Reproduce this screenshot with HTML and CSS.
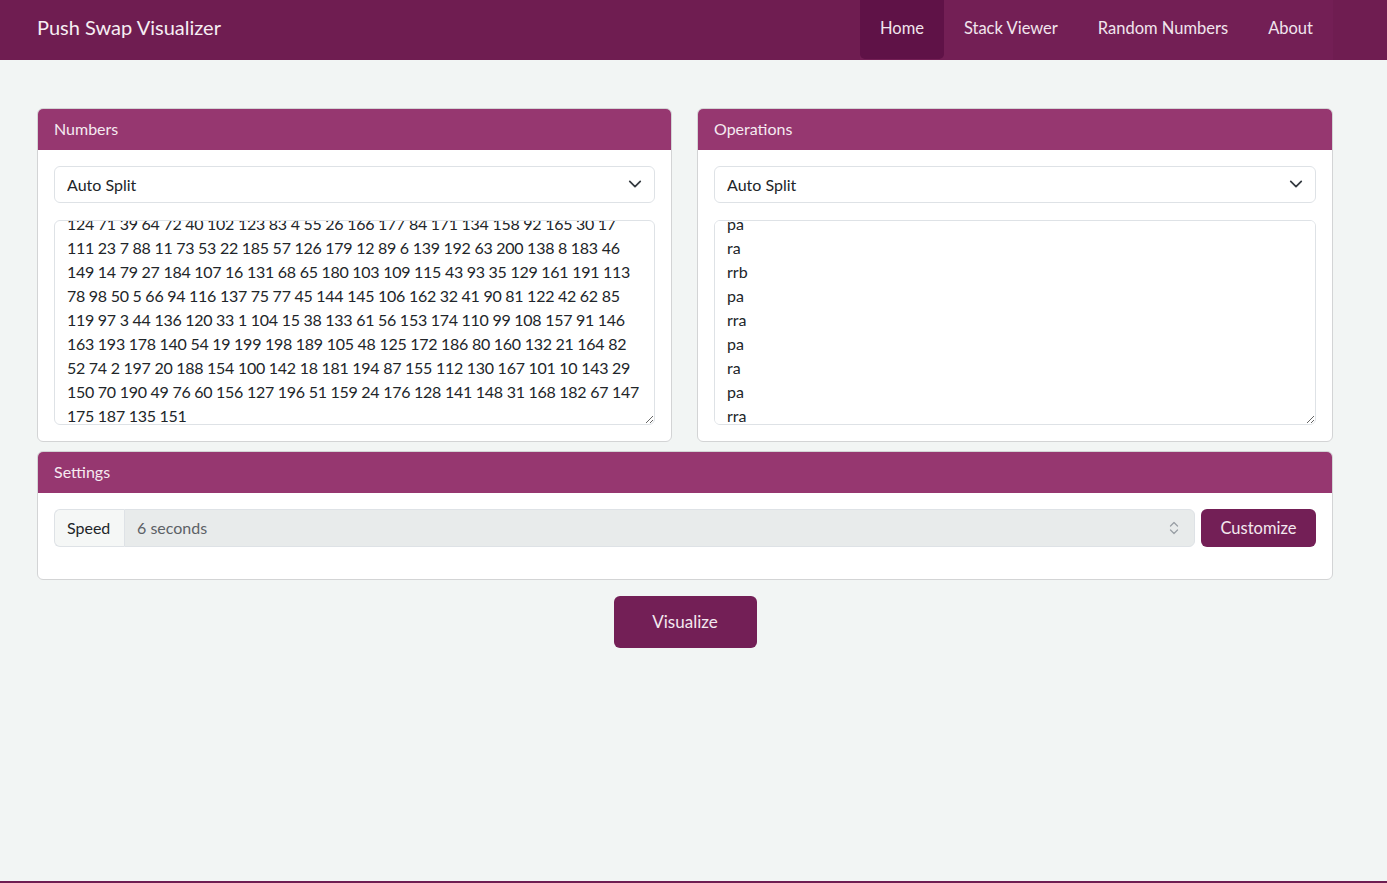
FILE: index.html
```html
<!DOCTYPE html>
<html lang="en">
<head>
<meta charset="utf-8">
<title>Push Swap Visualizer</title>
<link rel="stylesheet" href="styles.css">
</head>
<body>
<header class="navbar">
  <div class="nav-inner">
    <a class="brand" href="#">Push Swap Visualizer</a>
    <nav class="nav-links">
      <a class="nav-item active" href="#">Home</a>
      <a class="nav-item" href="#">Stack Viewer</a>
      <a class="nav-item" href="#">Random Numbers</a>
      <a class="nav-item" href="#">About</a>
    </nav>
  </div>
</header>

<main class="container">
  <div class="row">
    <section class="card">
      <div class="card-header">Numbers</div>
      <div class="card-body">
        <div class="select-wrap">
          <select class="form-select"><option>Auto Split</option></select>
          <svg class="chev" width="16" height="16" viewBox="0 0 16 16"><path d="M2 5l6 6 6-6" fill="none" stroke="#343a40" stroke-width="2" stroke-linecap="round" stroke-linejoin="round"/></svg>
        </div>
        <textarea class="form-text numbers scroll-end" spellcheck="false" wrap="off">33 86 117 36 152 59 118 170 114 185 69 96 47 121 195 13 37 9 169 180 173 28 58
124 71 39 64 72 40 102 123 83 4 55 26 166 177 84 171 134 158 92 165 30 17
111 23 7 88 11 73 53 22 185 57 126 179 12 89 6 139 192 63 200 138 8 183 46
149 14 79 27 184 107 16 131 68 65 180 103 109 115 43 93 35 129 161 191 113
78 98 50 5 66 94 116 137 75 77 45 144 145 106 162 32 41 90 81 122 42 62 85
119 97 3 44 136 120 33 1 104 15 38 133 61 56 153 174 110 99 108 157 91 146
163 193 178 140 54 19 199 198 189 105 48 125 172 186 80 160 132 21 164 82
52 74 2 197 20 188 154 100 142 18 181 194 87 155 112 130 167 101 10 143 29
150 70 190 49 76 60 156 127 196 51 159 24 176 128 141 148 31 168 182 67 147
175 187 135 151</textarea>
      </div>
    </section>
    <section class="card">
      <div class="card-header">Operations</div>
      <div class="card-body">
        <div class="select-wrap">
          <select class="form-select"><option>Auto Split</option></select>
          <svg class="chev" width="16" height="16" viewBox="0 0 16 16"><path d="M2 5l6 6 6-6" fill="none" stroke="#343a40" stroke-width="2" stroke-linecap="round" stroke-linejoin="round"/></svg>
        </div>
        <textarea class="form-text scroll-end" spellcheck="false">pb
pb
ra
pb
rb
pa
ra
pa
rra
pa
ra
pa
ra
rrb
pa
rra
pa
ra
pa
rra</textarea>
      </div>
    </section>
  </div>

  <section class="card settings">
    <div class="card-header">Settings</div>
    <div class="card-body">
      <div class="input-group">
        <span class="ig-label">Speed</span>
        <div class="ig-select">
          <select class="speed-select" disabled><option>6 seconds</option></select>
          <svg class="updown" width="10" height="16" viewBox="0 0 10 16"><path d="M1.5 6L5 2.5 8.5 6M1.5 10L5 13.5 8.5 10" fill="none" stroke="#9aa0a6" stroke-width="1.3" stroke-linecap="round" stroke-linejoin="round"/></svg>
        </div>
        <button class="btn btn-custom" type="button">Customize</button>
      </div>
    </div>
  </section>

  <div class="actions">
    <button class="btn btn-visualize" type="button">Visualize</button>
  </div>
</main>
<div class="bottom-line"></div>
<script src="script.js"></script>
</body>
</html>
```

FILE: styles.css
```css
* { box-sizing: border-box; }

html, body {
  margin: 0;
  padding: 0;
  height: 100%;
}

body {
  background: #f2f5f4;
  font-family: "Lato", "Liberation Sans", sans-serif;
  font-size: 16px;
  color: #212529;
  display: flex;
  flex-direction: column;
  min-height: 883px;
}

.navbar {
  background: #6f1d51;
  height: 60px;
}

.nav-inner {
  width: 1296px;
  margin-left: 37px;
  height: 60px;
  display: flex;
  align-items: center;
  justify-content: space-between;
}

.brand {
  color: #f6eef3;
  text-decoration: none;
  font-size: 20px;
  padding-bottom: 6px;
}

.nav-links {
  display: flex;
  height: 60px;
  background: #731f55;
}

.nav-item {
  display: flex;
  align-items: center;
  padding: 0 20px 3px;
  height: 59px;
  color: #f1e5ed;
  text-decoration: none;
  font-size: 16.5px;
}

.nav-item.active {
  background: #5f1247;
  border-radius: 0 0 5px 5px;
}

.container {
  width: 1296px;
  margin-left: 37px;
  padding-top: 48px;
  flex: 1;
}

.row {
  display: grid;
  grid-template-columns: 635px 636px;
  column-gap: 25px;
  margin-bottom: 9px;
}

.card {
  background: #fff;
  border: 1px solid #d3d4d5;
  border-radius: 6px;
  overflow: hidden;
}

.card-header {
  background: #963770;
  color: #f5eaf1;
  height: 41px;
  padding: 0 16px 2px;
  display: flex;
  align-items: center;
  font-size: 16px;
}

.card-body {
  padding: 16px;
}

.select-wrap {
  position: relative;
}

.form-select {
  display: block;
  width: 100%;
  height: 37px;
  appearance: none;
  -webkit-appearance: none;
  border: 1px solid #dee2e6;
  border-radius: 6px;
  background: #fff;
  padding: 0 36px 0 12px;
  font-family: inherit;
  font-size: 16px;
  color: #212529;
  outline: none;
}

.chev {
  position: absolute;
  right: 13px;
  top: 11px;
  width: 14px;
  height: 14px;
  pointer-events: none;
}

.form-text {
  display: block;
  width: 100%;
  height: 205px;
  margin-top: 17px;
  border: 1px solid #dee2e6;
  border-radius: 6px;
  padding: 6px 12px;
  font-family: inherit;
  font-size: 16px;
  line-height: 24px;
  color: #212529;
  resize: vertical;
  scrollbar-width: none;
  outline: none;
  white-space: pre-wrap;
}

.form-text.numbers {
  white-space: pre;
  letter-spacing: -0.27px;
  overflow: hidden;
}

.form-text::-webkit-scrollbar { display: none; }

.settings .card-body {
  padding-bottom: 32px;
}

.input-group {
  display: flex;
  height: 38px;
}

.ig-label {
  display: flex;
  align-items: center;
  padding: 0 12px 1px;
  width: 70px;
  background: #f5f7f6;
  border: 1px solid #dee2e6;
  border-right: none;
  border-radius: 6px 0 0 6px;
  color: #212529;
}

.ig-select {
  position: relative;
  flex: 1;
}

.speed-select {
  width: 100%;
  height: 38px;
  appearance: none;
  -webkit-appearance: none;
  background: #e8ebeb;
  border: 1px solid #dee2e6;
  border-radius: 0 6px 6px 0;
  padding: 0 36px 1px 12px;
  font-family: inherit;
  font-size: 16px;
  color: #5c6166;
  opacity: 1;
}

.updown {
  position: absolute;
  right: 16px;
  top: 11px;
  pointer-events: none;
}

.btn {
  font-family: inherit;
  border: none;
  border-radius: 6px;
  background: #731f56;
  color: #f3e8ef;
  cursor: pointer;
}

.btn-custom {
  margin-left: 6px;
  width: 115px;
  height: 38px;
  font-size: 16.5px;
  padding-bottom: 2px;
}

.actions {
  display: flex;
  justify-content: center;
  padding-top: 16px;
}

.btn-visualize {
  width: 143px;
  height: 52px;
  font-size: 17px;
  padding-bottom: 2px;
}

.bottom-line {
  height: 2px;
  background: #6f1d51;
}
```

FILE: script.js
```js
document.querySelectorAll('.scroll-end').forEach(function (t) {
  t.scrollTop = t.scrollHeight - t.clientHeight - 10;
});
```
